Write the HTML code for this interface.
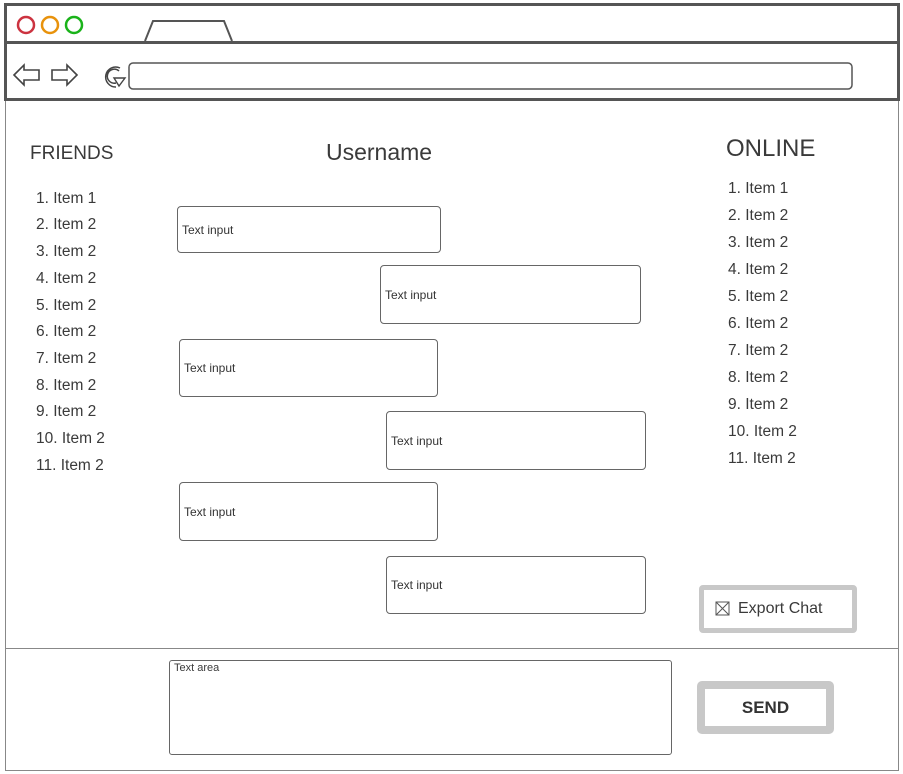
<!DOCTYPE html>
<html><head><meta charset="utf-8"><style>
*{margin:0;padding:0;box-sizing:border-box}
body{width:903px;height:774px;background:#fff;position:relative;overflow:hidden;font-family:"Liberation Sans",sans-serif;color:#3a3a3a}
.a{position:absolute}
.inp{position:absolute;border:1px solid #666;border-radius:4px;background:#fff;font-size:12px;padding-left:4px;display:flex;align-items:center;color:#333}
.li{position:absolute;font-size:15.5px;line-height:20px;color:#3a3a3a}
</style></head><body>
<div class="a" style="left:5px;top:3px;width:894px;height:768px;border:1px solid #888"></div>
<div class="a" style="left:4px;top:3px;width:896px;height:40px;border:3px solid #555;border-bottom:none"></div>
<div class="a" style="left:4px;top:41px;width:896px;height:60px;border:3px solid #555"></div>
<svg class="a" style="left:0;top:0" width="903" height="110">
<circle cx="26" cy="25" r="8" fill="none" stroke="#cc3340" stroke-width="2.5"/>
<circle cx="50" cy="25" r="8" fill="none" stroke="#e8920c" stroke-width="2.5"/>
<circle cx="74" cy="25" r="8" fill="none" stroke="#1ab31a" stroke-width="2.5"/>
<path d="M145 41 L153 21 L224 21 L232 41" fill="none" stroke="#555" stroke-width="2"/>
<path d="M14 75 L24 65 L24 70 L39 70 L39 80 L24 80 L24 85 Z" fill="none" stroke="#444" stroke-width="1.6"/>
<path d="M77 75 L67 65 L67 70 L52 70 L52 80 L67 80 L67 85 Z" fill="none" stroke="#444" stroke-width="1.6"/>
<path d="M120 68 A10 10 0 1 0 116 87 M116 83 A7 7 0 1 1 119 71" fill="none" stroke="#444" stroke-width="1.5"/>
<path d="M114 78 L125 78 L119 86 Z" fill="#fff" stroke="#444" stroke-width="1.4"/>
<rect x="129" y="63" width="723" height="26" rx="4" fill="none" stroke="#555" stroke-width="1.5"/>
</svg>
<div class="a" style="left:5px;top:648px;width:894px;height:1px;background:#888"></div>

<div class="a" style="left:30px;top:143px;font-size:19px">FRIENDS</div>
<div class="a" style="left:326px;top:139px;font-size:23px">Username</div>
<div class="a" style="left:726px;top:135px;font-size:24px">ONLINE</div>

<div class="li" style="left:36px;top:189px">1. Item 1</div>
<div class="li" style="left:36px;top:215px">2. Item 2</div>
<div class="li" style="left:36px;top:242px">3. Item 2</div>
<div class="li" style="left:36px;top:269px">4. Item 2</div>
<div class="li" style="left:36px;top:296px">5. Item 2</div>
<div class="li" style="left:36px;top:322px">6. Item 2</div>
<div class="li" style="left:36px;top:349px">7. Item 2</div>
<div class="li" style="left:36px;top:376px">8. Item 2</div>
<div class="li" style="left:36px;top:402px">9. Item 2</div>
<div class="li" style="left:36px;top:429px">10. Item 2</div>
<div class="li" style="left:36px;top:456px">11. Item 2</div>

<div class="li" style="left:728px;top:179px">1. Item 1</div>
<div class="li" style="left:728px;top:206px">2. Item 2</div>
<div class="li" style="left:728px;top:233px">3. Item 2</div>
<div class="li" style="left:728px;top:260px">4. Item 2</div>
<div class="li" style="left:728px;top:287px">5. Item 2</div>
<div class="li" style="left:728px;top:314px">6. Item 2</div>
<div class="li" style="left:728px;top:341px">7. Item 2</div>
<div class="li" style="left:728px;top:368px">8. Item 2</div>
<div class="li" style="left:728px;top:395px">9. Item 2</div>
<div class="li" style="left:728px;top:422px">10. Item 2</div>
<div class="li" style="left:728px;top:449px">11. Item 2</div>

<div class="inp" style="left:177px;top:206px;width:264px;height:47px">Text input</div>
<div class="inp" style="left:380px;top:265px;width:261px;height:59px">Text input</div>
<div class="inp" style="left:179px;top:339px;width:259px;height:58px">Text input</div>
<div class="inp" style="left:386px;top:411px;width:260px;height:59px">Text input</div>
<div class="inp" style="left:179px;top:482px;width:259px;height:59px">Text input</div>
<div class="inp" style="left:386px;top:556px;width:260px;height:58px">Text input</div>

<div class="a" style="left:699px;top:585px;width:158px;height:48px;border:5px solid #c8c8c8;border-radius:4px;display:flex;align-items:center;padding-left:11px;font-size:16px">
<svg width="16" height="16" style="margin-right:7px"><rect x="1" y="1" width="13" height="13" fill="none" stroke="#555"/><path d="M1 1L14 14M14 1L1 14" stroke="#555"/></svg>Export Chat</div>

<div class="a" style="left:169px;top:660px;width:503px;height:95px;border:1px solid #666;border-radius:3px;font-size:11px;padding:1px 4px">Text area</div>

<div class="a" style="left:697px;top:681px;width:137px;height:53px;border:8px solid #c8c8c8;border-radius:5px;display:flex;align-items:center;justify-content:center;font-size:17px;font-weight:bold;color:#333">SEND</div>
</body></html>
